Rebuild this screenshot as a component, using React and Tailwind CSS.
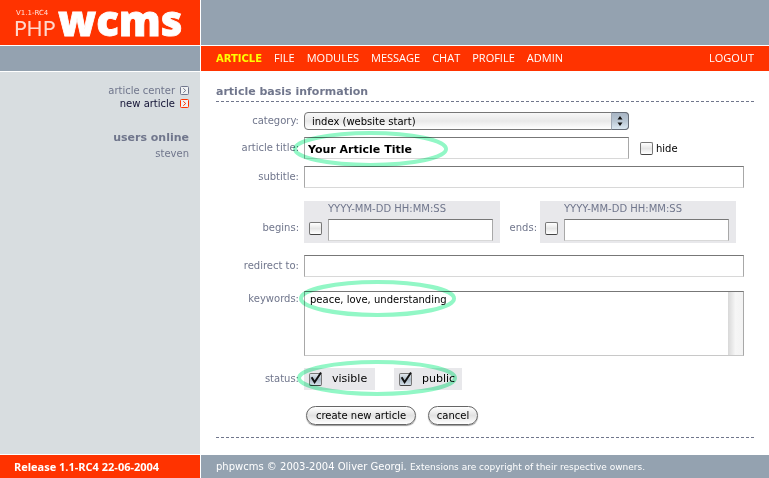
import React from "react";

const navItems = ["FILE", "MODULES", "MESSAGE", "CHAT", "PROFILE", "ADMIN"];

const fieldClass =
  "block h-[22px] border border-t-[#777777] border-l-[#a8a8a8] border-r-[#a8a8a8] border-b-[#d8d8d8] bg-white text-black outline-none";

function Highlight({ className }) {
  return (
    <svg
      className={"pointer-events-none absolute overflow-visible mix-blend-multiply " + className}
      viewBox="0 0 160 36"
      preserveAspectRatio="none"
      fill="none"
      aria-hidden="true"
    >
      <ellipse cx="80" cy="18" rx="78" ry="16" stroke="#92f7c6" strokeWidth="4" />
    </svg>
  );
}

function ArrowBox({ color }) {
  return (
    <svg width="9" height="9" viewBox="0 0 9 9" fill="none" stroke={color} aria-hidden="true">
      <rect x="0.5" y="0.5" width="8" height="8" rx="1" fill="#f0f2f3" />
      <path d="M3.3 2.3 5.7 4.5 3.3 6.7" />
    </svg>
  );
}

function Checkbox({ id, defaultChecked, label }) {
  return (
    <span className="relative block size-[13px] shrink-0">
      <input
        id={id}
        type="checkbox"
        defaultChecked={defaultChecked}
        aria-label={label}
        className="peer block size-[13px] appearance-none rounded-[2px] border border-[#777777] border-b-[#444444] bg-linear-to-b from-white via-[#e6e6e6] to-white checked:from-[#e2e8ee] checked:via-[#aebdca] checked:to-[#d5e0e9]"
      />
      <svg
        className="pointer-events-none absolute inset-0 hidden overflow-visible peer-checked:block"
        viewBox="0 0 13 13"
        fill="none"
        aria-hidden="true"
      >
        <path d="M2.6 4.2 5.6 9.2 12 -0.5" stroke="#111111" strokeWidth="2" />
      </svg>
    </span>
  );
}

function Row({ label, htmlFor, labelClass = "leading-[22px]", className = "", children }) {
  return (
    <div className={"grid grid-cols-[83px_minmax(0,1fr)] gap-x-[5px] " + className}>
      <label htmlFor={htmlFor} className={"text-right whitespace-nowrap " + labelClass}>
        {label}
      </label>
      {children}
    </div>
  );
}

function DateField({ id, name }) {
  return (
    <div className="grid h-[42px] w-[196px] grid-cols-[13px_165px] gap-x-[6px] bg-[#e8e8eb] pl-[5px]">
      <span className="col-start-2 h-4 leading-4">YYYY-MM-DD HH:MM:SS</span>
      <span className="col-start-1 pt-[3px]">
        <Checkbox id={id + "-on"} label={"set " + name} />
      </span>
      <input id={id} type="text" className={fieldClass + " w-full"} />
    </div>
  );
}

const buttonClass =
  "h-[19px] rounded-full border border-[#666666] bg-linear-to-b from-white via-[#e2e2e2] to-white text-center text-[10px] leading-[17px] text-black shadow-[0_1px_1px_#999999]";

export default function App() {
  return (
    <div className="flex min-h-screen flex-col bg-white font-['DejaVu_Sans',sans-serif] text-[10px] text-[#70768c]">
      <header className="grid grid-cols-[200px_minmax(0,1fr)] gap-px">
        <div className="h-[45px] bg-[#ff3300]">
          <svg width="200" height="45" viewBox="0 0 200 45" className="overflow-visible" role="img" aria-label="phpwcms V1.1-RC4">
            <text x="16" y="15" fontSize="7" fill="#ffe4dc" fontFamily="'DejaVu Sans', sans-serif">V1.1-RC4</text>
            <text x="14" y="36" fontSize="21" fontWeight="400" fill="#ffd8cc" fontFamily="Lato, sans-serif">PHP</text>
            <text x="58" y="36" fontSize="42" fontWeight="800" fill="#ffffff" stroke="#ffffff" strokeWidth="0.8" fontFamily="'Open Sans', sans-serif">wcms</text>
          </svg>
        </div>
        <div className="bg-[#94a2b0]" />
        <div className="h-[25px] bg-[#94a2b0]" />
        <nav className="flex items-center gap-3 bg-[#ff3300] pr-[15px] pl-[15px] font-['Open_Sans','Noto_Sans',sans-serif] text-[11px] font-medium text-white">
          <a href="#article" className="font-['DejaVu_Sans',sans-serif] text-[10px] font-bold text-[#ffff00]">ARTICLE</a>
          {navItems.map((item) => (
            <a key={item} href={"#" + item.toLowerCase()}>{item}</a>
          ))}
          <a href="#logout" className="ml-auto">LOGOUT</a>
        </nav>
      </header>

      <div className="mt-px grid flex-1 grid-cols-[200px_minmax(0,1fr)] gap-x-px">
        <aside className="bg-[#d8dde0] pt-3 pr-[11px] text-right">
          <a href="#center" className="flex h-[13px] items-center justify-end gap-[5px]">
            article center <ArrowBox color="#70768c" />
          </a>
          <a href="#new" className="flex h-[13px] items-center justify-end gap-[5px] text-[#111133]">
            new article <ArrowBox color="#ff3300" />
          </a>
          <h2 className="mt-5 text-[11px] leading-4 font-bold">users online</h2>
          <p className="leading-4">steven</p>
        </aside>

        <main className="pr-[15px] pb-4 pl-[15px]">
          <h1 className="border-b border-dashed border-[#70768c] pt-[13px] pb-[2px] text-[11px] leading-[14px] font-bold">
            article basis information
          </h1>

          <form onSubmit={(event) => event.preventDefault()}>
            <Row label="category:" htmlFor="category" labelClass="leading-[18px]" className="mt-[10px]">
              <div className="relative w-[325px] max-w-full">
                <select
                  id="category"
                  className="block h-[18px] w-full appearance-none rounded-[4px] border border-[#777777] bg-linear-to-b from-[#f8f8f8] via-[#e9e9e9] to-white pl-[7px] text-[10px] text-black"
                >
                  <option>index (website start)</option>
                </select>
                <span className="pointer-events-none absolute inset-y-0 right-0 flex w-[18px] items-center justify-center rounded-r-[4px] border border-[#666c77] border-l-[#a0a8b4] bg-linear-to-b from-[#a8b5c4] via-[#b9c6d3] to-[#dce8f2]">
                  <svg width="6" height="10" viewBox="0 0 6 10" fill="#111111" aria-hidden="true">
                    <path d="M3 0 5.5 3.5H0.5ZM3 10 5.5 6.5H0.5Z" />
                  </svg>
                </span>
              </div>
            </Row>

            <Row label="article title:" htmlFor="title" className="relative mt-[7px]">
              <div className="flex items-center gap-[11px]">
                <input
                  id="title"
                  type="text"
                  defaultValue="Your Article Title"
                  className={fieldClass + " w-[325px] pt-[2px] pl-[3px] text-[11px] font-bold"}
                />
                <span className="flex items-center gap-[3px] text-black">
                  <Checkbox id="hide" />
                  <label htmlFor="hide">hide</label>
                </span>
              </div>
              <Highlight className="-top-[6px] left-[77px] h-9 w-[155px]" />
            </Row>

            <Row label="subtitle:" htmlFor="subtitle" className="mt-[7px]">
              <input id="subtitle" type="text" className={fieldClass + " w-full max-w-[440px]"} />
            </Row>

            <Row label="begins:" htmlFor="begins" labelClass="pt-4 leading-[22px]" className="mt-[13px]">
              <div className="flex">
                <DateField id="begins" name="begin date" />
                <label htmlFor="ends" className="w-10 pt-4 pr-[3px] text-right leading-[22px]">ends:</label>
                <DateField id="ends" name="end date" />
              </div>
            </Row>

            <Row label="redirect to:" htmlFor="redirect" className="mt-3">
              <input id="redirect" type="text" className={fieldClass + " w-full max-w-[440px]"} />
            </Row>

            <Row label="keywords:" htmlFor="keywords" labelClass="leading-4" className="relative mt-[14px]">
              <div className="flex h-[65px] w-full max-w-[440px] border border-t-[#777777] border-r-[#a8a8a8] border-b-[#c8c8c8] border-l-[#a8a8a8]">
                <textarea
                  id="keywords"
                  defaultValue="peace, love, understanding"
                  className="block min-w-0 flex-1 resize-none overflow-hidden pl-[5px] leading-4 text-black outline-none"
                />
                <div className="w-[15px] bg-linear-to-r from-[#d8d8d8] via-[#f6f6f6] to-[#f3f3f3]" />
              </div>
              <Highlight className="-top-[11px] left-[83px] h-[37px] w-[157px]" />
            </Row>

            <div className="relative mt-3 grid grid-cols-[83px_minmax(0,1fr)] gap-x-[5px]">
              <span className="text-right leading-[22px]">status:</span>
              <div className="flex gap-[19px] text-[11px] text-black">
                <span className="flex h-[22px] w-[71px] items-center gap-[10px] bg-[#e8e8eb] pl-[5px]">
                  <Checkbox id="visible" defaultChecked />
                  <label htmlFor="visible">visible</label>
                </span>
                <span className="flex h-[22px] w-[68px] items-center gap-[10px] bg-[#e8e8eb] pl-[5px]">
                  <Checkbox id="public" defaultChecked />
                  <label htmlFor="public">public</label>
                </span>
              </div>
              <Highlight className="-top-2 left-[81px] h-9 w-[160px]" />
            </div>

            <div className="mt-4 flex gap-3 border-b border-dashed border-[#70768c] pb-3 pl-[90px]">
              <button type="submit" className={buttonClass + " w-[110px]"}>create new article</button>
              <button type="button" className={buttonClass + " w-[50px]"}>cancel</button>
            </div>
          </form>
        </main>
      </div>

      <footer className="mt-px grid h-6 grid-cols-[200px_minmax(0,1fr)] gap-x-px leading-6 text-white">
        <div className="bg-[#ff3300] pl-[14px] font-['Open_Sans','Noto_Sans',sans-serif] text-[11px] font-bold">Release 1.1-RC4 22-06-2004</div>
        <div className="bg-[#94a2b0] pl-[15px]">
          phpwcms © 2003-2004 Oliver Georgi. <span className="text-[9px]">Extensions are copyright of their respective owners.</span>
        </div>
      </footer>
    </div>
  );
}
